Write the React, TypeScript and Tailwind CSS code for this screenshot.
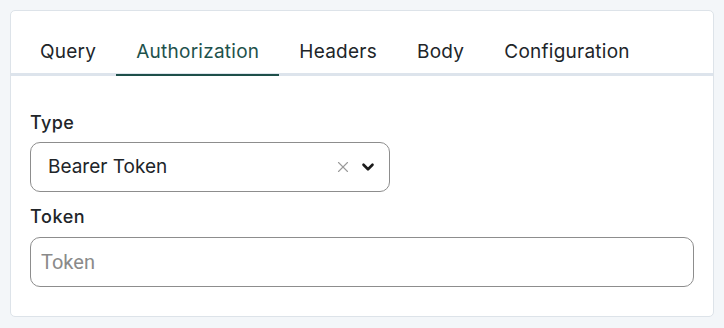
import { X, ChevronDown } from 'lucide-react';

const tabs = ['Query', 'Authorization', 'Headers', 'Body', 'Configuration'];

export default function App() {
  const active = 'Authorization';

  return (
    <div className="min-h-screen bg-[#f3f6f9] p-[10px] font-['Inter',sans-serif] text-[#212529]">
      <div className="h-[307px] rounded-[5px] border border-[#dde3e9] bg-white">
        {/* Tabs */}
        <div className="flex border-b-[3px] border-[#dde4ec] px-[9px]">
          {tabs.map((tab) => (
            <button
              key={tab}
              className={`relative px-5 pt-[29px] pb-[9px] text-[19px] leading-6 tracking-[0.25px] ${
                tab === active ? 'text-[#1e524c]' : 'text-[#212529]'
              }`}
            >
              {tab}
              {tab === active && (
                <span className="absolute -bottom-[3px] left-0 right-0 h-[2px] bg-[#1e4f4a]" />
              )}
            </button>
          ))}
        </div>

        {/* Form */}
        <div className="flex flex-col px-[19px] pt-[35px]">
          <label className="text-[18px] font-medium leading-6 tracking-[0.4px]">Type</label>
          <div className="mt-[7px] flex h-[50px] w-[360px] items-center rounded-[10px] border border-[#8d8d8d] pl-[17px] pr-[12px]">
            <span className="flex-1 text-[19px]">Bearer Token</span>
            <X className="h-[18px] w-[18px] text-[#9a9a9a]" strokeWidth={1.5} />
            <ChevronDown className="ml-[7px] h-[18px] w-[18px] text-[#1a1a1a]" strokeWidth={3.5} />
          </div>

          <label className="mt-[13px] text-[18px] font-medium leading-6 tracking-[0.6px]">
            Token
          </label>
          <input
            placeholder="Token"
            className="mt-[8px] h-[50px] w-full rounded-[10px] border border-[#8d8d8d] px-[10px] font-['Roboto',sans-serif] text-[20px] placeholder:text-[#8a8a8a] outline-none"
          />
        </div>
      </div>
    </div>
  );
}
